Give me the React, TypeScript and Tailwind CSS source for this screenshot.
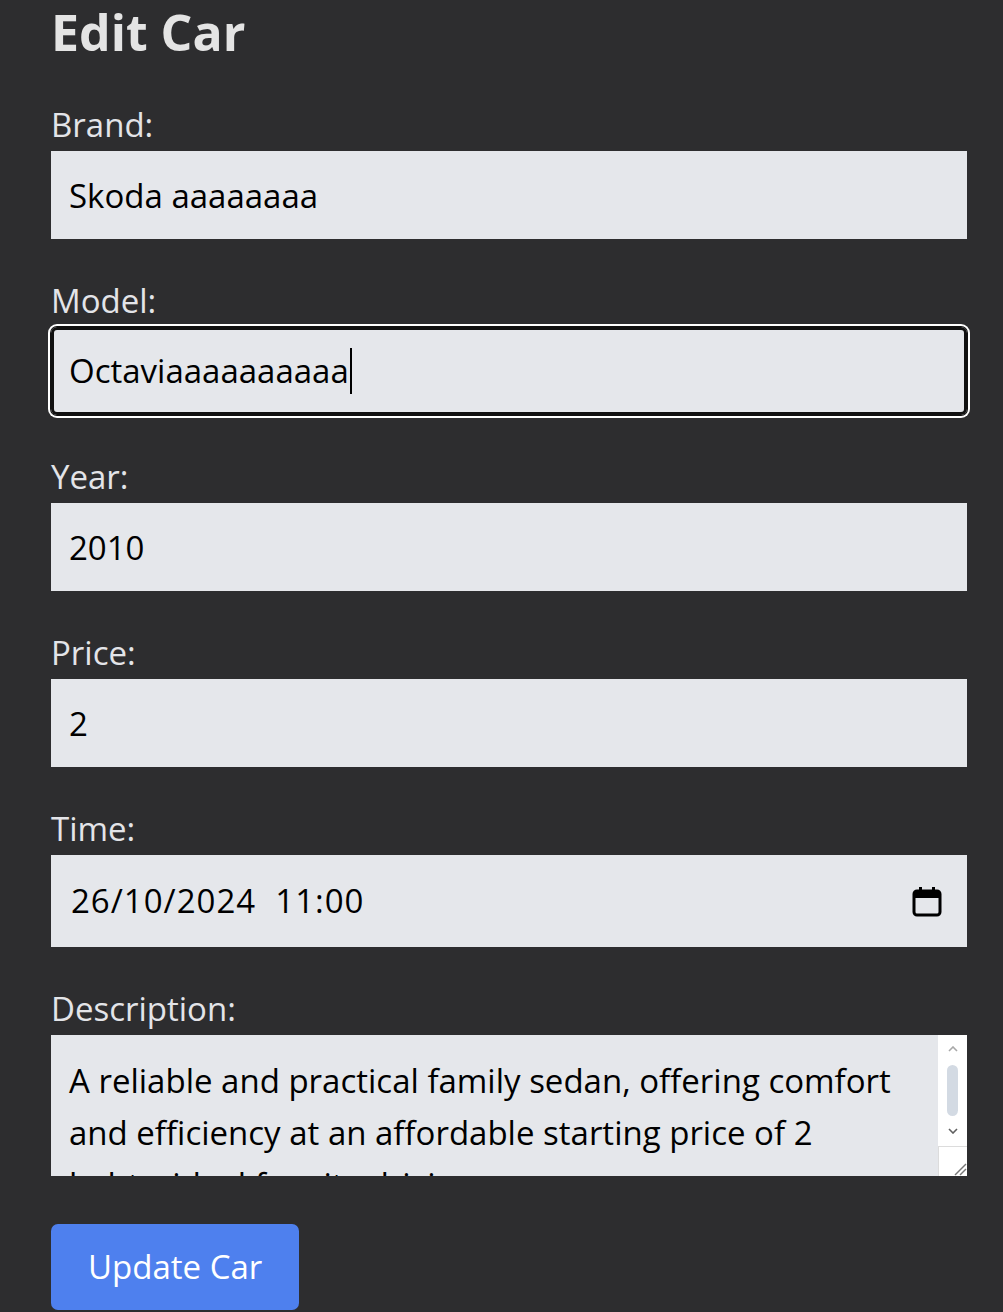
import { useState } from "react";

const font = { fontFamily: '"Open Sans", "Noto Sans", sans-serif' };

function Field({ label, value }: { label: string; value: string }) {
  return (
    <div className="flex flex-col">
      <label className="text-[33px] leading-[44px] text-[#e3e4e8]">{label}</label>
      <input
        readOnly
        value={value}
        className="mt-[4px] h-[88px] w-full bg-[#e5e7eb] px-[18px] text-[33px] text-black outline-none"
      />
    </div>
  );
}

function CalendarIcon() {
  return (
    <svg width="30" height="32" viewBox="0 0 30 32" fill="none">
      <rect x="2" y="6" width="26" height="24" rx="3" stroke="#000" strokeWidth="3" />
      <rect x="2" y="6" width="26" height="7" fill="#000" />
      <rect x="7" y="2" width="3" height="6" fill="#000" />
      <rect x="20" y="2" width="3" height="6" fill="#000" />
    </svg>
  );
}

function Chevron({ up, color }: { up?: boolean; color: string }) {
  return (
    <svg width="10" height="6" viewBox="0 0 10 6">
      <polyline
        points={up ? "1,5 5,1 9,5" : "1,1 5,5 9,1"}
        fill="none"
        stroke={color}
        strokeWidth="1.6"
      />
    </svg>
  );
}

export default function App() {
  const [desc] = useState(
    "A reliable and practical family sedan, offering comfort and efficiency at an affordable starting price of 2 bahts, ideal for city driving."
  );

  return (
    <div className="min-h-[1312px] bg-[#2d2d2f]" style={font}>
      <div className="px-[51px] pr-[36px]">
        <h1 className="text-[50px] font-bold leading-[64px] text-[#e4e4e4]">Edit Car</h1>

        <form className="mt-[39px] flex flex-col gap-[40px]" onSubmit={(e) => e.preventDefault()}>
          <Field label="Brand:" value="Skoda aaaaaaaa" />

          {/* focused field */}
          <div className="flex flex-col">
            <label className="text-[33px] leading-[44px] text-[#e3e4e8]">Model:</label>
            <div className="mt-[4px] flex h-[88px] w-full items-center rounded-[6px] bg-[#e5e7eb] px-[18px] text-[33px] text-black shadow-[inset_0_0_0_3px_#111,0_0_0_1px_#111,0_0_0_3px_#fff]">
              <span>Octaviaaaaaaaaaa</span>
              <span className="ml-[1px] h-[46px] w-[2px] bg-black" />
            </div>
          </div>

          <Field label="Year:" value="2010" />
          <Field label="Price:" value="2" />

          <div className="flex flex-col">
            <label className="text-[33px] leading-[44px] text-[#e3e4e8]">Time:</label>
            <div className="mt-[4px] flex h-[92px] w-full items-center justify-between bg-[#e5e7eb] pl-[20px] pr-[25px] text-[33px] text-black">
              <span className="whitespace-pre tracking-[1px]">26/10/2024  11:00</span>
              <CalendarIcon />
            </div>
          </div>

          <div className="flex flex-col">
            <label className="text-[33px] leading-[44px] text-[#e3e4e8]">Description:</label>
            <div className="mt-[4px] flex h-[141px] w-full bg-[#e5e7eb]">
              <div className="flex-1 overflow-hidden pl-[18px] pr-[30px] pt-[20px] text-[33px] leading-[52px] text-black">
                {desc}
              </div>
              <div className="flex w-[29px] flex-col bg-white">
                <div className="flex h-[26px] items-center justify-center pt-[2px]">
                  <Chevron up color="#a8a8a8" />
                </div>
                <div className="mx-auto mt-[4px] h-[51px] w-[11px] rounded-full bg-[#d3dae3]" />
                <div className="mt-[8px] flex h-[14px] items-center justify-center">
                  <Chevron color="#606060" />
                </div>
                <div className="mt-auto h-[30px] border-l border-t border-[#dcdcdc] bg-white">
                  <svg width="28" height="29" viewBox="0 0 28 29">
                    <line x1="16" y1="28" x2="27" y2="17" stroke="#777" strokeWidth="1.5" />
                    <line x1="21" y1="28" x2="27" y2="22" stroke="#777" strokeWidth="1.5" />
                  </svg>
                </div>
              </div>
            </div>
          </div>

          <div className="mt-[8px]">
            <button className="h-[86px] rounded-[7px] bg-[#4e80ee] px-[37px] text-[33px] text-white">
              Update Car
            </button>
          </div>
        </form>
      </div>
    </div>
  );
}
